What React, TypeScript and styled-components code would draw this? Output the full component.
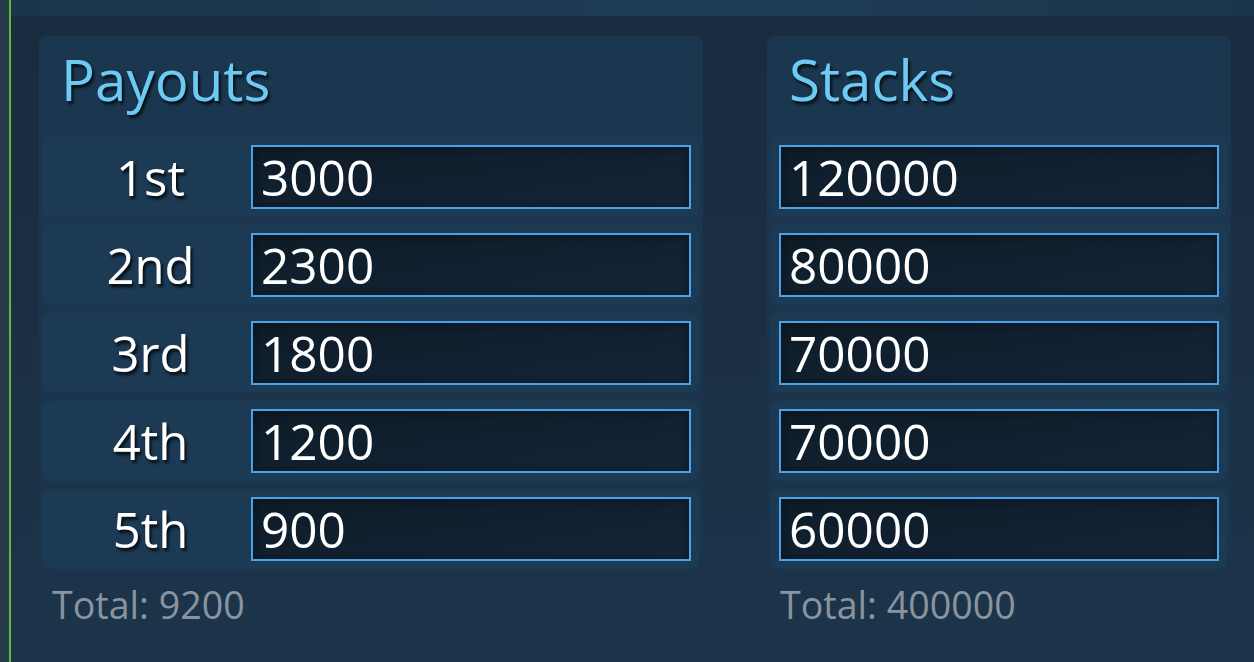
import React from 'react';
import styled, { createGlobalStyle } from 'styled-components';

const GlobalStyle = createGlobalStyle`
  html, body {
    margin: 0;
    padding: 0;
    background: #1a2d42;
  }
  * {
    box-sizing: border-box;
  }
`;

const colors = {
  strip: '#26394a',
  green: '#62b935',
  panelTop: '#192b3f',
  panelBottom: '#1c344a',
  card: '#1b374f',
  row: '#1c3a53',
  title: '#6ccaf5',
  border: '#4ba2e6',
  total: '#8a949e',
};

const Screen = styled.div`
  display: flex;
  width: 1254px;
  height: 662px;
  overflow: hidden;
  font-family: 'Open Sans', 'Noto Sans', sans-serif;
`;

const SideStrip = styled.div`
  flex: 0 0 9px;
  background: ${colors.strip};
  border-right: 2px solid ${colors.green};
  box-sizing: content-box;
`;

const Main = styled.div`
  flex: 1;
  display: flex;
  flex-direction: column;
  background: linear-gradient(to bottom, ${colors.panelTop}, ${colors.panelBottom});
`;

const TopBand = styled.div`
  height: 16px;
  background: linear-gradient(to right, #1b364c, #1e3c55 60%, #1b364c);
`;

const Content = styled.div`
  display: grid;
  grid-template-columns: 664px 464px;
  column-gap: 64px;
  padding: 20px 23px 0 28px;
`;

const Card = styled.section`
  display: flex;
  flex-direction: column;
  border-radius: 8px;
  background: linear-gradient(
    to bottom,
    ${colors.card} 0,
    ${colors.card} 100px,
    rgba(27, 54, 77, 0.35) 560px
  );
`;

const CardHeader = styled.div`
  height: 101px;
  padding: 5px 0 0 22px;
`;

const Title = styled.h2`
  margin: 0;
  font-size: 56.5px;
  font-weight: 400;
  color: ${colors.title};
  text-shadow: 2px 3px 3px rgba(0, 0, 0, 0.75);
`;

const RowList = styled.div<{ $inset: string }>`
  display: flex;
  flex-direction: column;
  gap: 8px;
  margin: ${(p) => p.$inset};
`;

const Row = styled.div`
  display: flex;
  align-items: center;
  height: 80px;
  padding: 8px;
  border-radius: 8px;
  background: ${colors.row};
`;

const Place = styled.div`
  flex: 0 0 201px;
  text-align: center;
  font-size: 49px;
  color: #ffffff;
  text-shadow: 2px 3px 3px rgba(0, 0, 0, 0.8);
`;

const Field = styled.input`
  flex: 1;
  min-width: 0;
  height: 64px;
  padding: 0 8px;
  border: 2px solid ${colors.border};
  border-radius: 0;
  outline: none;
  font-family: 'Open Sans', 'Noto Sans', sans-serif;
  font-size: 49.5px;
  color: #ffffff;
  background: linear-gradient(to bottom right, #0e1b28, #142638);
  box-shadow: inset 0 0 10px rgba(0, 0, 0, 0.45);
`;

const Total = styled.div`
  margin-top: 10px;
  padding-left: 13px;
  font-size: 37.6px;
  color: ${colors.total};
`;

const payouts = [
  { place: '1st', value: '3000' },
  { place: '2nd', value: '2300' },
  { place: '3rd', value: '1800' },
  { place: '4th', value: '1200' },
  { place: '5th', value: '900' },
];

const stacks = ['120000', '80000', '70000', '70000', '60000'];

const sum = (values: string[]) => values.reduce((acc, v) => acc + Number(v), 0);

const App = () => {
  return (
    <Screen>
      <GlobalStyle />
      <SideStrip />
      <Main>
        <TopBand />
        <Content>
          <Card>
            <CardHeader>
              <Title>Payouts</Title>
            </CardHeader>
            <RowList $inset="0 4px 0 3px">
              {payouts.map((p) => (
                <Row key={p.place}>
                  <Place>{p.place}</Place>
                  <Field defaultValue={p.value} />
                </Row>
              ))}
            </RowList>
            <Total>Total: {sum(payouts.map((p) => p.value))}</Total>
          </Card>
          <Card>
            <CardHeader>
              <Title>Stacks</Title>
            </CardHeader>
            <RowList $inset="0 4px">
              {stacks.map((s, i) => (
                <Row key={i}>
                  <Field defaultValue={s} />
                </Row>
              ))}
            </RowList>
            <Total>Total: {sum(stacks)}</Total>
          </Card>
        </Content>
      </Main>
    </Screen>
  );
};

export default App;
